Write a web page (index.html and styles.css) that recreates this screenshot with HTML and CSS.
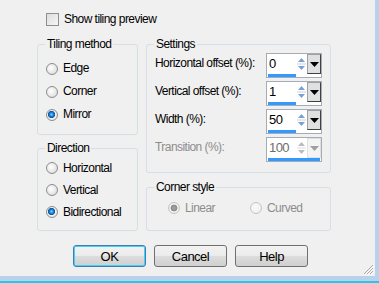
FILE: index.html
```html
<!DOCTYPE html>
<html lang="en">
<head>
    <title>Tile Settings</title>
    <link rel="stylesheet" href="styles.css">
</head>
<body>
    <div class="window">
        <div class="dialog">
            <!-- preview toggle -->
            <label class="check-row">
                <span class="checkbox"></span> Show tiling preview
            </label>

            <div class="columns">
                <div class="col-left">
                    <fieldset class="group group-tiling">
                        <legend>Tiling method</legend>
                        <div class="radio-row"><span class="radio"></span>Edge</div>
                        <div class="radio-row"><span class="radio"></span>Corner</div>
                        <div class="radio-row"><span class="radio checked"></span>Mirror</div>
                    </fieldset>

                    <fieldset class="group group-direction">
                        <legend>Direction</legend>
                        <div class="radio-row"><span class="radio"></span>Horizontal</div>
                        <div class="radio-row"><span class="radio"></span>Vertical</div>
                        <div class="radio-row"><span class="radio checked"></span>Bidirectional</div>
                    </fieldset>
                </div>

                <div class="col-right">
                    <fieldset class="group group-settings">
                        <legend>Settings</legend>

                        <div class="field-row">
                            <span class="field-label">Horizontal offset (%):</span>
                            <div class="spin">
                                <div class="spin-main">
                                    <span class="spin-value">0</span>
                                    <span class="spin-arrows">
                                        <svg width="9" height="16" viewBox="0 0 9 16"><path d="M1 6 L4.5 2 L8 6 Z" fill="#7aa0d2"/><line x1="0" y1="8" x2="9" y2="8" stroke="#c9d3e0"/><path d="M1 10 L4.5 14 L8 10 Z" fill="#7aa0d2"/></svg>
                                    </span>
                                    <span class="spin-drop"><svg width="9" height="5" viewBox="0 0 9 5"><path d="M0 0 H9 L4.5 5 Z" fill="#000"/></svg></span>
                                </div>
                                <div class="spin-bar"></div>
                            </div>
                        </div>

                        <div class="field-row">
                            <span class="field-label">Vertical offset (%):</span>
                            <div class="spin">
                                <div class="spin-main">
                                    <span class="spin-value">1</span>
                                    <span class="spin-arrows">
                                        <svg width="9" height="16" viewBox="0 0 9 16"><path d="M1 6 L4.5 2 L8 6 Z" fill="#7aa0d2"/><line x1="0" y1="8" x2="9" y2="8" stroke="#c9d3e0"/><path d="M1 10 L4.5 14 L8 10 Z" fill="#7aa0d2"/></svg>
                                    </span>
                                    <span class="spin-drop"><svg width="9" height="5" viewBox="0 0 9 5"><path d="M0 0 H9 L4.5 5 Z" fill="#000"/></svg></span>
                                </div>
                                <div class="spin-bar"></div>
                            </div>
                        </div>

                        <div class="field-row">
                            <span class="field-label">Width (%):</span>
                            <div class="spin">
                                <div class="spin-main">
                                    <span class="spin-value">50</span>
                                    <span class="spin-arrows">
                                        <svg width="9" height="16" viewBox="0 0 9 16"><path d="M1 6 L4.5 2 L8 6 Z" fill="#7aa0d2"/><line x1="0" y1="8" x2="9" y2="8" stroke="#c9d3e0"/><path d="M1 10 L4.5 14 L8 10 Z" fill="#7aa0d2"/></svg>
                                    </span>
                                    <span class="spin-drop"><svg width="9" height="5" viewBox="0 0 9 5"><path d="M0 0 H9 L4.5 5 Z" fill="#000"/></svg></span>
                                </div>
                                <div class="spin-bar"></div>
                            </div>
                        </div>

                        <div class="field-row disabled">
                            <span class="field-label">Transition (%):</span>
                            <div class="spin">
                                <div class="spin-main">
                                    <span class="spin-value">100</span>
                                    <span class="spin-arrows">
                                        <svg width="9" height="16" viewBox="0 0 9 16"><path d="M1 6 L4.5 2 L8 6 Z" fill="#b8bcc2"/><line x1="0" y1="8" x2="9" y2="8" stroke="#d8dce0"/><path d="M1 10 L4.5 14 L8 10 Z" fill="#b8bcc2"/></svg>
                                    </span>
                                    <span class="spin-drop"><svg width="9" height="5" viewBox="0 0 9 5"><path d="M0 0 H9 L4.5 5 Z" fill="#a0a0a0"/></svg></span>
                                </div>
                                <div class="spin-bar"></div>
                            </div>
                        </div>
                    </fieldset>

                    <fieldset class="group group-corner">
                        <legend>Corner style</legend>
                        <div class="corner-options">
                            <div class="radio-row disabled opt-linear"><span class="radio checked"></span>Linear</div>
                            <div class="radio-row disabled"><span class="radio"></span>Curved</div>
                        </div>
                    </fieldset>
                </div>
            </div>

            <div class="buttons">
                <button class="btn btn-default" type="button">OK</button>
                <button class="btn" type="button">Cancel</button>
                <button class="btn" type="button">Help</button>
            </div>

            <!-- size grip -->
            <svg class="grip" width="12" height="12" viewBox="0 0 12 12">
                <path d="M11 2 L2 11 M11 5 L5 11 M11 8 L8 11" stroke="#a9a9a9" stroke-width="1"/>
                <path d="M12 3 L3 12 M12 6 L6 12 M12 9 L9 12" stroke="#ffffff" stroke-width="1"/>
            </svg>
        </div>
        <div class="frame-side"></div>
    </div>
    <div class="frame-bottom"></div>
</body>
</html>
```

FILE: styles.css
```css
body {
    margin: 0;
    padding: 0;
    background-color: #f0f0f0;
    font-family: "Liberation Sans", Arial, sans-serif;
    font-size: 12px;
    letter-spacing: -0.55px;
    line-height: 13px;
    color: #000;
}

.window {
    display: flex;
    height: 276px;
}

.dialog {
    position: relative;
    width: 375px;
    padding: 13px 0 0 37px;
    box-sizing: border-box;
}

.frame-side {
    width: 4px;
    background-color: #b9d1ea;
}

.frame-bottom {
    height: 5px;
    background-color: #b9d1ea;
    border-bottom: 2px solid #2ac6ea;
}

/* checkbox */
.check-row {
    display: flex;
    align-items: center;
    height: 13px;
    padding-left: 9px;
    margin-bottom: 12px;
}

.checkbox {
    width: 11px;
    height: 11px;
    border: 1px solid #8e8f8f;
    background: linear-gradient(135deg, #dcdcdc, #f6f6f6);
    margin-right: 5px;
}

/* columns */
.columns {
    display: flex;
    gap: 8px;
}

.col-left {
    width: 101px;
}

.col-right {
    width: 185px;
}

.group {
    margin: 0;
    padding: 0 8px;
    border: 1px solid #d5dfe5;
    border-radius: 3px;
    min-width: 0;
}

.group legend {
    margin-left: -1px;
    padding: 0 2px;
    height: 13px;
    line-height: 13px;
    white-space: nowrap;
}

.group-tiling {
    height: 97px;
    box-sizing: border-box;
    padding-top: 6px;
}

.group-tiling .radio-row {
    height: 23px;
}

.group-direction {
    margin-top: 7px;
    height: 89px;
    box-sizing: border-box;
    padding-top: 2px;
}

.group-direction .radio-row {
    height: 22px;
}

.radio-row {
    display: flex;
    align-items: center;
}

.radio {
    width: 10px;
    height: 10px;
    border: 1px solid #8d8d8d;
    border-radius: 50%;
    background: radial-gradient(circle at 40% 40%, #ffffff 0, #e6e6e6 60%, #cfcfcf 100%);
    margin-right: 5px;
    flex: none;
}

.radio.checked {
    background: radial-gradient(circle at 45% 45%, #7fd0ff 0, #1a7fd4 2px, #0b4f9a 3.4px, #f4f4f4 3.8px, #d8d8d8 100%);
}

.radio-row.disabled {
    color: #8d8d8d;
}

.radio-row.disabled .radio {
    border-color: #c4c4c4;
    background: radial-gradient(circle at 40% 40%, #fafafa 0, #ececec 100%);
}

.radio-row.disabled .radio.checked {
    background: radial-gradient(circle, #a4a4a4 0, #8c8c8c 3px, #f4f4f4 3.8px, #e0e0e0 100%);
}

/* settings */
.group-settings {
    height: 135px;
    box-sizing: border-box;
    padding-top: 2px;
}

.field-row {
    display: flex;
    justify-content: space-between;
    height: 25px;
    margin-bottom: 3px;
}

.field-label {
    padding-top: 4px;
}

.field-row.disabled .field-label {
    color: #8d8d8d;
}

.spin {
    width: 56px;
    height: 25px;
    box-sizing: border-box;
    border: 1px solid #a5acb5;
    background-color: #fff;
    display: flex;
    flex-direction: column;
}

.spin-main {
    flex: 1;
    display: flex;
}

.spin-value {
    width: 29px;
    padding: 3px 0 0 2px;
    box-sizing: border-box;
    font-size: 13px;
}

.spin-arrows {
    width: 11px;
    display: flex;
    align-items: center;
    justify-content: center;
}

.spin-drop {
    width: 14px;
    box-sizing: border-box;
    border: 1px solid #a0a0a0;
    border-right-color: #404040;
    border-bottom-color: #404040;
    background-color: #e0e0e0;
    display: flex;
    align-items: center;
    justify-content: center;
}

.spin-bar {
    width: 28px;
    height: 3px;
    margin-left: 1px;
    background-color: #3399ff;
}

.field-row.disabled .spin-value {
    color: #6d6d6d;
}

.field-row.disabled .spin-drop {
    border-color: #e0e0e0;
    background-color: #f4f4f4;
}

.field-row.disabled .spin-bar {
    width: auto;
    margin-right: 1px;
}

/* corner style */
.group-corner {
    margin-top: 8px;
    height: 50px;
    box-sizing: border-box;
    padding-top: 3px;
}

.corner-options {
    display: flex;
    height: 22px;
    padding-left: 13px;
}

.opt-linear {
    width: 82px;
}

/* buttons */
.buttons {
    display: flex;
    gap: 8px;
    margin: 14px 0 0 36px;
}

.btn {
    width: 73px;
    height: 22px;
    padding: 0;
    border: 1px solid #707070;
    border-radius: 3px;
    background: linear-gradient(#f2f2f2 0, #ebebeb 50%, #dddddd 50%, #cfcfcf 100%);
    font-family: inherit;
    font-size: 13px;
    letter-spacing: -0.5px;
    color: #000;
}

.btn-default {
    border: 1px solid #3c7fb1;
    box-shadow: inset 0 0 0 1px #48d0f4;
}

.grip {
    position: absolute;
    right: 1px;
    bottom: 1px;
}
```
